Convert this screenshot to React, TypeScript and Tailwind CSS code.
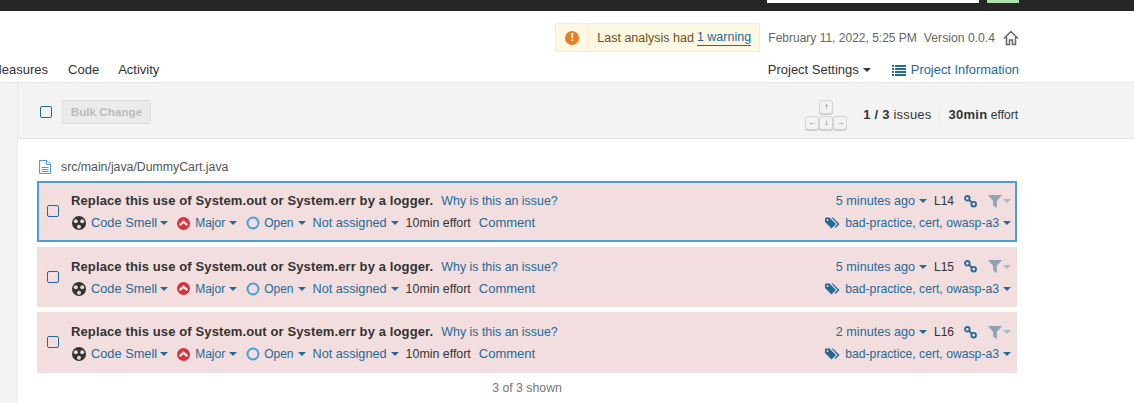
import React from 'react';

const Caret = ({ className = 'ml-[4px] border-t-[#236a97]' }: { className?: string }) => (
  <span className={`inline-block h-0 w-0 border-x-[4px] border-t-[4px] border-x-transparent ${className}`} />
);

const SmellIcon = () => (
  <svg width="14" height="14" viewBox="0 0 14 14" className="shrink-0">
    <circle cx="7" cy="7" r="7" fill="#333" />
    <circle cx="3.800" cy="5.200" r="2" fill="#e8d8d8" />
    <circle cx="10.200" cy="5.200" r="2" fill="#e8d8d8" />
    <circle cx="7" cy="10.800" r="2" fill="#e8d8d8" />
    <circle cx="7" cy="7" r="1.100" fill="#333" />
  </svg>
);

const MajorIcon = () => (
  <svg width="13" height="13" viewBox="0 0 13 13" className="shrink-0">
    <circle cx="6.500" cy="6.500" r="6.500" fill="#d4333f" />
    <path d="M2.600 8.200 6.500 4.800l3.900 3.400" fill="none" stroke="#f6e6e6" strokeWidth="2.200" />
  </svg>
);

const OpenIcon = () => (
  <svg width="14" height="14" viewBox="0 0 14 14" className="shrink-0">
    <circle cx="7" cy="7" r="5.500" fill="none" stroke="#4b9fd5" strokeWidth="2" />
  </svg>
);

const LinkIcon = () => (
  <svg width="13" height="13" viewBox="0 0 13 13" className="shrink-0">
    <circle cx="3.300" cy="3.300" r="2.300" fill="none" stroke="#236a97" strokeWidth="1.800" />
    <circle cx="9.700" cy="9.200" r="2.300" fill="none" stroke="#236a97" strokeWidth="1.800" />
    <path d="M5 5l3 2.700" stroke="#236a97" strokeWidth="1.800" />
  </svg>
);

const FilterIcon = () => (
  <svg width="14" height="13" viewBox="0 0 14 13" className="shrink-0">
    <path d="M0 0h14L8.800 6v7l-3.600-2.500V6z" fill="#8fa3b5" />
  </svg>
);

const TagsIcon = () => (
  <svg width="15" height="12" viewBox="0 0 15 12" className="shrink-0">
    <path d="M0 1v4l6.500 6.500 4.500-4.500L4.500.5H1z" fill="#236a97" />
    <path d="M6.500.5H8L14.500 7l-4 4-1-1 3-3z" fill="#236a97" />
    <circle cx="2.500" cy="3" r=".9" fill="#f2dede" />
  </svg>
);

const FileIcon = () => (
  <svg width="12" height="14" viewBox="0 0 12 14" className="shrink-0">
    <path d="M.5.500H8L11.500 4v9.500H.5z" fill="none" stroke="#4b9fd5" />
    <path d="M7.500.5v4h4M2.500 7.500h7M2.500 9.500h7M2.500 11.500h7" fill="none" stroke="#4b9fd5" />
  </svg>
);

const HomeIcon = () => (
  <svg width="16" height="16" viewBox="0 0 16 16" className="shrink-0">
    <path d="M1 8.500 8 1.500l7 7M3.500 7v7.500h3v-4.500h3v4.500h3V7" fill="none" stroke="#666" strokeWidth="1.500" />
  </svg>
);

const ListIcon = () => (
  <svg width="14" height="11" viewBox="0 0 14 11" className="shrink-0">
    <path d="M0 0h2v2H0zM3 0h11v2H3zM0 3h2v2H0zM3 3h11v2H3zM0 6h2v2H0zM3 6h11v2H3zM0 9h2v2H0zM3 9h11v2H3z" fill="#236a97" />
  </svg>
);

const Key = ({ label }: { label: string }) => (
  <span className="flex h-[14px] w-[14px] items-center justify-center rounded-[3px] border border-[#d4d4d4] bg-[#f2f2f2] text-[8px] leading-none text-[#555] shadow-[0_1px_0_#ccc]">
    {label}
  </span>
);

interface IssueProps {
  age: string;
  line: string;
  selected?: boolean;
}

const Issue = ({ age, line, selected }: IssueProps) => (
  <div
    className={`flex h-[60.5px] items-stretch border-2 bg-[#f2dede] ${selected ? 'border-[#4b9fd5]' : 'border-[#f2dede]'}`}
  >
    <div className="flex w-[32px] shrink-0 items-center pl-[8px]">
      <span className="h-[12px] w-[12px] rounded-[2px] border border-[#236a97]" />
    </div>
    <div className="flex min-w-0 flex-1 flex-col pt-[10px] pr-[4px]">
      <div className="flex h-[16px] items-center justify-between">
        <div className="flex items-center">
          <span className="text-[13px] font-bold tracking-[0.12px] text-[#333]">Replace this use of System.out or System.err by a logger.</span>
          <span className="ml-[8px] text-[12.4px] text-[#236a97]">Why is this an issue?</span>
        </div>
        <div className="flex items-center">
          <span className="text-[12.6px] text-[#236a97]">{age}</span>
          <Caret />
          <span className="ml-[7px] text-[#333]">{line}</span>
          <span className="ml-[10px]"><LinkIcon /></span>
          <span className="ml-[11px]"><FilterIcon /></span>
          <Caret className="ml-[1px] border-t-[#a9b8c6]" />
        </div>
      </div>
      <div className="mt-[6px] flex h-[16px] items-center justify-between">
        <div className="flex items-center pl-[1px]">
          <SmellIcon />
          <span className="ml-[5px] text-[12.8px] text-[#236a97]">Code Smell</span>
          <Caret className="ml-[3px] border-t-[#236a97]" />
          <span className="ml-[9px]"><MajorIcon /></span>
          <span className="ml-[5px] text-[#236a97]">Major</span>
          <Caret />
          <span className="ml-[9px]"><OpenIcon /></span>
          <span className="ml-[4px] text-[#236a97]">Open</span>
          <Caret />
          <span className="ml-[7px] text-[12.7px] text-[#236a97]">Not assigned</span>
          <Caret />
          <span className="ml-[7px] text-[12.4px] text-[#333]">10min effort</span>
          <span className="ml-[8px] text-[13px] text-[#236a97]">Comment</span>
        </div>
        <div className="flex items-center">
          <TagsIcon />
          <span className="ml-[5px] text-[12.2px] text-[#236a97]">bad-practice, cert, owasp-a3</span>
          <Caret />
        </div>
      </div>
    </div>
  </div>
);

export default function App() {
  return (
    <div className="flex h-[403px] w-[1134px] flex-col overflow-hidden bg-white font-['Liberation_Sans',Arial,sans-serif] text-[12px] leading-[16px] text-[#333]">
      {/* Global nav */}
      <div className="flex h-[11px] shrink-0 justify-end gap-[8px] bg-[#262626] pr-[115px]">
        <div className="h-[3px] w-[212px] bg-white" />
        <div className="h-[3px] w-[32px] bg-[#b0e0b0]" />
      </div>

      {/* Project header */}
      <div className="flex h-[72px] shrink-0 flex-col border-b border-[#e6e6e6] pr-[115px]">
        <div className="mt-[12px] flex items-center justify-end">
          <div className="flex h-[29px] w-[205px] items-stretch rounded-[2px] border border-[#faebcc] bg-[#fcf8e3]">
            <div className="flex w-[33px] items-center justify-center border-r border-[#faebcc]">
              <span className="flex h-[14px] w-[14px] items-center justify-center rounded-full bg-[#e67e22] text-[11px] font-bold leading-none text-white">!</span>
            </div>
            <div className="flex items-center pl-[8px] text-[12.5px] text-[#6f5213]">
              Last analysis had<a className="ml-[3px] border-b border-[#236a97] text-[#236a97]">1 warning</a>
            </div>
          </div>
          <span className="ml-[8px] text-[#666]">February 11, 2022, 5:25 PM</span>
          <span className="ml-[7px] text-[12.2px] text-[#666]">Version 0.0.4</span>
          <span className="ml-[8px]"><HomeIcon /></span>
        </div>
        <div className="mt-[10px] flex items-center justify-between text-[13px]">
          <div className="ml-[-9px] flex items-center">
            <span>Measures</span>
            <span className="ml-[20px]">Code</span>
            <span className="ml-[19px]">Activity</span>
          </div>
          <div className="flex items-center">
            <span>Project Settings</span>
            <Caret className="ml-[4px] border-t-[#333]" />
            <span className="ml-[21px]"><ListIcon /></span>
            <span className="ml-[5px] text-[12.9px] text-[#236a97]">Project Information</span>
          </div>
        </div>
      </div>

      <div className="flex min-h-0 flex-1">
        {/* Sidebar */}
        <div className="w-[18px] shrink-0 border-r border-[#e6e6e6] bg-[#f3f3f3]" />

        <div className="flex min-w-0 flex-1 flex-col">
          {/* Toolbar */}
          <div className="flex h-[56px] shrink-0 items-center justify-between border-b border-[#e6e6e6] bg-[#f3f3f3] pt-[2px] pr-[116px] pl-[22px]">
            <div className="flex items-center">
              <span className="h-[12px] w-[12px] rounded-[2px] border border-[#236a97]" />
              <span className="ml-[10px] flex h-[24px] w-[89px] items-center justify-center rounded-[2px] border border-[#ddd] bg-[#ebebeb] text-[11.7px] font-bold text-[#bbb]">
                Bulk Change
              </span>
            </div>
            <div className="mt-[6px] flex items-center">
              <div className="flex flex-col items-center gap-[2px]">
                <Key label="↑" />
                <div className="flex"><Key label="←" /><Key label="↓" /><Key label="→" /></div>
              </div>
              <span className="ml-[16px] text-[13px] tracking-[0.2px]"><b>1 / 3</b> issues</span>
              <span className="ml-[8px] border-l border-[#e6e6e6] pl-[8px]"><b className="text-[13px] tracking-[0.3px]">30min</b> effort</span>
            </div>
          </div>

          {/* Issues */}
          <div className="pr-[117px] pl-[19px]">
            <div className="mt-[20px] flex h-[16px] items-center pl-[2px]">
              <FileIcon />
              <span className="ml-[10px] text-[12.3px] text-[#555]">src/main/java/DummyCart.java</span>
            </div>
            <div className="mt-[6px] flex flex-col gap-[5px]">
              <Issue age="5 minutes ago" line="L14" selected />
              <Issue age="5 minutes ago" line="L15" />
              <Issue age="2 minutes ago" line="L16" />
            </div>
            <div className="mt-[7px] text-center text-[12.3px] text-[#777]">3 of 3 shown</div>
          </div>
        </div>
      </div>
    </div>
  );
}
